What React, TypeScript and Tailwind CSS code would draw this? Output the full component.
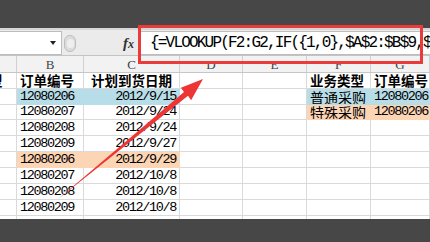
import React from "react";

type Fill = "none" | "blue" | "peach";
type Row = {
  a?: string;
  b: string;
  c: string;
  f?: string;
  g?: string;
  bcFill: Fill;
  fgFill: Fill;
  header?: boolean;
  h: number;
};

const rows: Row[] = [
  { a: "业务类型", b: "订单编号", c: "计划到货日期", f: "业务类型", g: "订单编号", bcFill: "none", fgFill: "none", header: true, h: 16 },
  { b: "12080206", c: "2012/9/15", f: "普通采购", g: "12080206", bcFill: "blue", fgFill: "blue", h: 16 },
  { b: "12080207", c: "2012/9/24", f: "特殊采购", g: "12080206", bcFill: "none", fgFill: "peach", h: 15 },
  { b: "12080208", c: "2012/9/24", bcFill: "none", fgFill: "none", h: 16 },
  { b: "12080209", c: "2012/9/27", bcFill: "none", fgFill: "none", h: 16 },
  { b: "12080206", c: "2012/9/29", bcFill: "peach", fgFill: "none", h: 16 },
  { b: "12080207", c: "2012/10/8", bcFill: "none", fgFill: "none", h: 16 },
  { b: "12080208", c: "2012/10/8", bcFill: "none", fgFill: "none", h: 16 },
  { b: "12080209", c: "2012/10/8", bcFill: "none", fgFill: "none", h: 16 },
];

const cjk = { fontFamily: '"Noto Sans CJK SC", "Noto Sans", sans-serif' };
const mono = { fontFamily: '"Liberation Mono", "DejaVu Sans Mono", monospace' };

function fillCls(f: Fill) {
  if (f === "blue") return "bg-[#b7dde8] border-[#b7dde8]";
  if (f === "peach") return "bg-[#fcd5b4] border-[#fcd5b4]";
  return "bg-white border-[#dadada]";
}

function Cell({
  fill,
  children,
  className,
}: {
  fill: Fill;
  children?: React.ReactNode;
  className?: string;
}) {
  return (
    <div
      className={
        "flex items-center overflow-hidden whitespace-nowrap border-r border-b text-black " +
        fillCls(fill) +
        " " +
        (className ?? "")
      }
    >
      {children}
    </div>
  );
}

function Num({ children }: { children: React.ReactNode }) {
  return (
    <span className="text-[13.5px] tracking-[-1.35px] leading-none" style={mono}>
      {children}
    </span>
  );
}

function Hdr({ children }: { children: React.ReactNode }) {
  return (
    <span className="text-[13.5px] font-bold leading-none" style={cjk}>
      {children}
    </span>
  );
}

export default function App() {
  const cols = "grid grid-cols-[17px_67px_96px_63px_64px_64px_1fr]";
  return (
    <div className="relative w-[430px] h-[242px] overflow-hidden bg-white flex flex-col">
      {/* top dark bar */}
      <div className="h-[28px] bg-[#474747] shrink-0" />
      {/* formula bar */}
      <div className="h-[28px] shrink-0 bg-[#ebebeb] border-t-2 border-[#d6d6d6] border-b border-b-[#c4c4c4] flex items-stretch pt-px">
        <div className="w-[62px] bg-white border border-l-0 border-[#bdbdbd] flex items-center justify-end pr-[5px]">
          <svg width="6" height="4" viewBox="0 0 6 4">
            <polygon points="0,0 6,0 3,4" fill="#222" />
          </svg>
        </div>
        <div className="ml-[2px] w-[13px] flex items-center">
          <div className="w-[12px] h-[17px] rounded-full bg-[#dcdcdc] border border-[#bdbdbd] flex items-center justify-center">
            <div className="w-[7px] h-[9px] rounded-full bg-[#eeeeee]" />
          </div>
        </div>
        <div className="w-[46px]" />
        <div className="w-[17px] flex items-center">
          <span
            className="italic font-bold text-[15px] text-[#333] leading-none"
            style={{ fontFamily: '"Liberation Serif", serif' }}
          >
            f<span className="text-[12px]">x</span>
          </span>
        </div>
        <div className="flex-1 bg-white border border-[#bdbdbd] border-r-0 flex items-center pl-[9px] overflow-hidden whitespace-nowrap">
          <span className="text-[16px] tracking-[-1.8px] leading-none text-black" style={mono}>
            {"{=VLOOKUP(F2:G2,IF({1,0},$A$2:$B$9,$B$2:$B$9),2,0)}"}
          </span>
        </div>
      </div>
      {/* column headers */}
      <div className={cols + " h-[17px] shrink-0 bg-[#f2f2f2] border-b border-[#c6c6c6]"}>
        {["", "B", "C", "D", "E", "F", "G"].map((l, i) => (
          <div
            key={i}
            className="flex items-center justify-center border-r border-[#d0d0d0] text-[13px] text-[#444] leading-none"
            style={{ fontFamily: '"Liberation Serif", serif' }}
          >
            {l}
          </div>
        ))}
      </div>
      {/* rows */}
      {rows.map((r, i) => (
        <div key={i} className={cols + " shrink-0 " + (r.h === 15 ? "h-[15px]" : "h-[16px]")}>
          <Cell fill="none" className="justify-end pr-[13.5px]">
            {r.a ? <Hdr>{r.a}</Hdr> : null}
          </Cell>
          <Cell fill={r.bcFill} className="pl-[3px]">
            {r.header ? <Hdr>{r.b}</Hdr> : <Num>{r.b}</Num>}
          </Cell>
          <Cell fill={r.bcFill} className={r.header ? "justify-center" : "justify-end pr-[3px]"}>
            {r.header ? <Hdr>{r.c}</Hdr> : <Num>{r.c}</Num>}
          </Cell>
          <Cell fill="none" />
          <Cell fill="none" />
          <Cell fill={r.fgFill} className="pl-[3px]">
            {r.f ? (
              r.header ? (
                <Hdr>{r.f}</Hdr>
              ) : (
                <span className="text-[14px] leading-none" style={cjk}>
                  {r.f}
                </span>
              )
            ) : null}
          </Cell>
          <Cell fill={r.fgFill} className="pl-[3px]">
            {r.g ? r.header ? <Hdr>{r.g}</Hdr> : <Num>{r.g}</Num> : null}
          </Cell>
        </div>
      ))}
      <div className={cols + " h-[3px] shrink-0"}>
        {[0, 1, 2, 3, 4, 5, 6].map((i) => (
          <div key={i} className="border-r border-[#dadada]" />
        ))}
      </div>
      {/* bottom dark bar */}
      <div className="flex-1 bg-[#474747]" />

      {/* red highlight rectangle */}
      <div className="absolute left-[138px] top-[25px] w-[285px] h-[39px] border-[3px] border-[#ea3a3a]" />

      {/* red arrow */}
      <svg className="absolute left-0 top-0" width="430" height="242" viewBox="0 0 430 242">
        <polygon
          points="56.7,200.3 57.3,199.7 184,92 180.9,87.8 203,79 191.1,100.2 188,95.8"
          fill="#ee3535"
        />
      </svg>
    </div>
  );
}
